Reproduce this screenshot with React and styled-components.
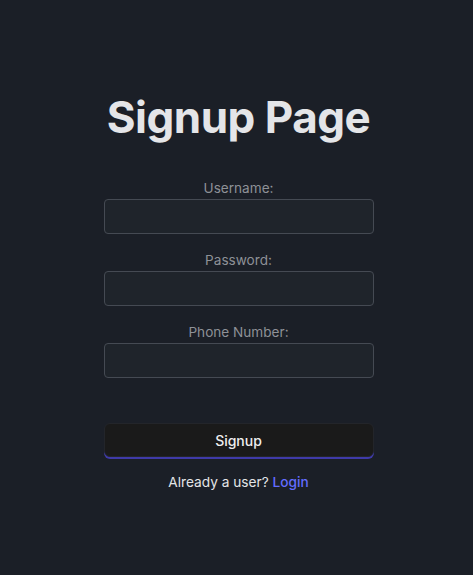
import React, { useState } from "react";
import styled, { createGlobalStyle } from "styled-components";

const GlobalStyle = createGlobalStyle`
  html, body {
    margin: 0;
    padding: 0;
    background: #1b1f27;
  }
  body {
    font-family: Inter, "Noto Sans", sans-serif;
    color: rgba(255, 255, 255, 0.87);
  }
`;

const Page = styled.div`
  min-height: 575px;
  display: flex;
  justify-content: center;
  padding-left: 4px;
  background: #1b1f27;
`;

const Container = styled.div`
  width: 270px;
  padding-top: 89px;
  display: flex;
  flex-direction: column;
  align-items: center;
`;

const Title = styled.h1`
  margin: 0 0 33px;
  font-size: 44px;
  font-weight: 700;
  line-height: 56px;
  letter-spacing: -0.5px;
  color: #e4e5e8;
  white-space: nowrap;
`;

const Form = styled.form`
  width: 100%;
  display: flex;
  flex-direction: column;
`;

const Field = styled.div`
  display: flex;
  flex-direction: column;
  align-items: center;
  margin-bottom: 16px;
`;

const Label = styled.label`
  font-size: 13.6px;
  line-height: 20px;
  color: #8e9197;
  margin-bottom: 1px;
`;

const Input = styled.input`
  box-sizing: border-box;
  width: 100%;
  height: 35px;
  background: #1f242b;
  border: 1px solid #454a53;
  border-radius: 4px;
  color: #e4e5e8;
  padding: 0 10px;
  font-family: inherit;
  font-size: 14px;
  outline: none;
`;

const Button = styled.button`
  box-sizing: border-box;
  margin-top: 29px;
  width: 100%;
  height: 34px;
  background: #1a1a1a;
  border: 1px solid #23252a;
  border-radius: 6px;
  box-shadow: 0 2px 0 #3f3aa8;
  color: #eeeeee;
  font-family: inherit;
  font-size: 14px;
  font-weight: 500;
  cursor: pointer;
`;

const Footer = styled.p`
  margin: 15px 0 0;
  font-size: 13.7px;
  line-height: 20px;
  color: #e4e5e8;
  text-align: center;
`;

const LoginLink = styled.a`
  color: #646cff;
  text-decoration: none;
  font-weight: 500;
`;

const fields = [
  { name: "username", label: "Username:", type: "text" },
  { name: "password", label: "Password:", type: "password" },
  { name: "phone", label: "Phone Number:", type: "tel" },
];

const App = () => {
  const [values, setValues] = useState({ username: "", password: "", phone: "" });

  const handleChange = (e) => {
    setValues({ ...values, [e.target.name]: e.target.value });
  };

  return (
    <Page>
      <GlobalStyle />
      <Container>
        <Title>Signup Page</Title>
        <Form onSubmit={(e) => e.preventDefault()}>
          {fields.map((f) => (
            <Field key={f.name}>
              <Label htmlFor={f.name}>{f.label}</Label>
              <Input
                id={f.name}
                name={f.name}
                type={f.type}
                value={values[f.name]}
                onChange={handleChange}
              />
            </Field>
          ))}
          <Button type="submit">Signup</Button>
        </Form>
        <Footer>
          Already a user? <LoginLink href="#">Login</LoginLink>
        </Footer>
      </Container>
    </Page>
  );
};

export default App;
